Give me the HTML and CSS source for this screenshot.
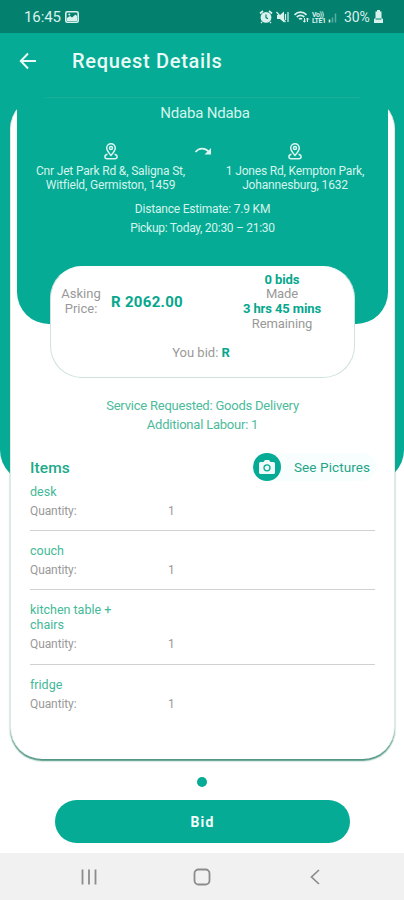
FILE: index.html
```html
<!DOCTYPE html>
<html lang="en">
<head>
<meta charset="utf-8">
<title>Request Details</title>
<link rel="stylesheet" href="styles.css">
</head>
<body>
<div class="screen">
  <div class="backdrop"></div>
  <header class="status">
    <span class="time">16:45</span>
    <svg class="shot" width="14" height="12" viewBox="0 0 14 12"><rect x=".8" y=".8" width="12.4" height="10.4" rx="1.5" fill="none" stroke="#d9f1ed" stroke-width="1.6"/><path d="M2 10V7l3-2 2 1.500 3.500-3L12 5v5z" fill="#d9f1ed"/><circle cx="4.300" cy="3.500" r="1" fill="#d9f1ed"/></svg>
    <svg class="sysicons" width="78" height="14" viewBox="0 0 78 14" fill="none" stroke="#d9f1ed">
      <path d="M1 3.500L4 1M10 1l3 2.500" stroke-width="1.700"/><circle cx="7" cy="7.400" r="5.400" fill="#d9f1ed" stroke="none"/><path d="M7 4.600v3l2 1.200" stroke="#04806e" stroke-width="1.200"/><path d="M3 12l-1 1M11 12l1 1" stroke-width="1.300"/>
      <path d="M18 5h3l4-3.500v11L21 9h-3z" fill="#d9f1ed" stroke="none"/><path d="M17.500 2l9 10" stroke-width="1.200"/><path d="M26.500 4v6M29 2v10" stroke-width="1.200"/>
      <path d="M35.500 4.800c3.500-3.500 8.500-3.500 12 0M37.800 7c2.300-2 5.200-2 7.500 0M40 9.200c1-.8 2-.8 3 0" stroke-width="1.700"/><path d="M45.500 8v4M43.800 10.500l1.700 1.700 1.500-1.700M48.500 12V8M47 9.500L48.500 8 50 9.500" stroke-width="1"/>
      <path d="M70.500 12.500V9.500" stroke-width="1.600"/><path d="M73.500 12.500v-5M76.500 12.500v-9" stroke-width="1.500" opacity=".4"/>
      <text class="volte" x="53" y="6.500">Vo))</text><text class="volte" x="53" y="13">LTE1</text>
    </svg>
    <span class="battery">30%</span>
    <svg class="batt" width="9" height="13" viewBox="0 0 9 13"><path d="M3 0h3v1.500h1.500V8L9 9v4H0V9l1.500-1V1.500H3z" fill="#d9f1ed"/><path d="M1.500 9h6" stroke="#04806e"/></svg>
  </header>
  <div class="appbar">
    <svg width="18" height="18" viewBox="0 0 18 18" fill="none" stroke="#e9faf7" stroke-width="2"><path d="M17 9H2M9 1.500L1.800 9 9 16.500"/></svg>
    <h1>Request Details</h1>
  </div>
  <main class="card">
    <section class="hero">
      <div class="name">Ndaba Ndaba</div>
      <div class="route">
        <div class="stop">
          <svg class="pin" width="14" height="17" viewBox="0 0 14 17" fill="none" stroke="#dcf5f0" stroke-width="1.500"><path d="M7 12.400C4.800 10 2.700 7.700 2.700 5.100a4.300 4.300 0 0 1 8.600 0C11.300 7.700 9.200 10 7 12.400z"/><circle cx="7" cy="5" r="1.500"/><path d="M3.500 11.300C0 12 .2 15.700 3 15.700h8c2.800 0 3-3.700-.5-4.400"/></svg>
          <p class="from">Cnr Jet Park Rd &amp;, Saligna St,<br>Witfield, Germiston, 1459</p>
        </div>
        <svg class="turn" width="18" height="12" viewBox="0 0 18 12"><path d="M1.500 7C5 2.500 11 2.500 14.500 6.500" fill="none" stroke="#dcf5f0" stroke-width="1.700"/><path d="M17 3v6.500h-6.500z" fill="#dcf5f0"/></svg>
        <div class="stop">
          <svg class="pin" width="14" height="17" viewBox="0 0 14 17" fill="none" stroke="#dcf5f0" stroke-width="1.500"><path d="M7 12.400C4.800 10 2.700 7.700 2.700 5.100a4.300 4.300 0 0 1 8.600 0C11.300 7.700 9.200 10 7 12.400z"/><circle cx="7" cy="5" r="1.500"/><path d="M3.500 11.300C0 12 .2 15.700 3 15.700h8c2.800 0 3-3.700-.5-4.400"/></svg>
          <p class="to">1 Jones Rd, Kempton Park,<br>Johannesburg, 1632</p>
        </div>
      </div>
      <p class="meta dist">Distance Estimate: 7.9 KM</p>
      <p class="meta pickup">Pickup: Today, 20:30 – 21:30</p>
    </section>
    <section class="price">
      <div class="top">
        <div class="asking">Asking<br>Price:</div>
        <div class="amount">R 2062.00</div>
        <div class="bids"><b>0 bids</b><br>Made<br><b>3 hrs 45 mins</b><br>Remaining</div>
      </div>
      <div class="yours">You bid: <b>R</b></div>
    </section>
    <section class="service">
      <p>Service Requested: Goods Delivery</p>
      <p>Additional Labour: 1</p>
    </section>
    <section class="items">
      <div class="head">
        <h2>Items</h2>
        <div class="pictures">
          <span class="camera"><svg width="16" height="14" viewBox="0 0 16 14"><path d="M1.500 2h3L6 0h4l1.500 2h3q1.500 0 1.500 1.500v9q0 1.500-1.500 1.500h-13Q0 14 0 12.500v-9Q0 2 1.500 2z" fill="#effbf8"/><circle cx="8" cy="7.800" r="3" fill="none" stroke="#05ab94" stroke-width="1.300"/></svg></span>
          <span class="see">See Pictures</span>
        </div>
      </div>
      <div class="item"><h3>desk</h3><div class="qty"><span>Quantity:</span><span>1</span></div></div>
      <div class="item"><h3>couch</h3><div class="qty"><span>Quantity:</span><span>1</span></div></div>
      <div class="item"><h3>kitchen table +<br>chairs</h3><div class="qty"><span>Quantity:</span><span>1</span></div></div>
      <div class="item"><h3>fridge</h3><div class="qty"><span>Quantity:</span><span>1</span></div></div>
    </section>
  </main>
  <div class="dot"></div>
  <button class="bid">Bid</button>
  <nav class="nav">
    <svg width="16" height="16" viewBox="0 0 16 16" stroke="#8c8c8c" stroke-width="1.800"><path d="M1.500 .5v15M8 .5v15M14.500 .5v15"/></svg>
    <svg width="18" height="18" viewBox="0 0 18 18" fill="none" stroke="#8c8c8c" stroke-width="1.800"><rect x="1.500" y="1.500" width="15" height="15" rx="4"/></svg>
    <svg width="16" height="16" viewBox="0 0 16 16" fill="none" stroke="#8c8c8c" stroke-width="1.700"><path d="M12 1L4.500 8l7.500 7"/></svg>
  </nav>
</div>
</body>
</html>
```
FILE: styles.css
```css
* { box-sizing: border-box; }
body { margin: 0; font-family: Roboto, "Liberation Sans", sans-serif; background: #fff; }
h1, h2, h3, p { margin: 0; font-weight: 400; }
svg { display: block; flex: none; }
.screen { position: relative; width: 404px; height: 900px; display: flex; flex-direction: column; overflow: hidden; isolation: isolate; }
.backdrop { position: absolute; z-index: -1; left: 0; right: 0; top: 33px; height: 449px; background: #05ab94; border-radius: 0 0 32px 32px; }
.status { height: 33px; flex: none; background: #04806e; display: flex; align-items: center; padding: 0 21px 0 24px; color: #d9f1ed; }
.time { width: 41px; font-size: 15px; letter-spacing: -.1px; }
.battery { font-size: 14px; letter-spacing: -.1px; margin-left: 7px; width: 30px; }
.sysicons { margin-left: auto; }
.volte { font-size: 7px; font-weight: 700; fill: #d9f1ed; stroke: none; letter-spacing: -.4px; }
.appbar { height: 64px; flex: none; display: flex; align-items: center; padding: 0 0 8px 19px; gap: 35px; }
.appbar h1 { font-size: 20px; line-height: 24px; font-weight: 500; letter-spacing: .7px; color: #e9faf7; }
.card { height: 662px; flex: none; margin: 0 9px 0 10px; background: #fff; border-radius: 32px; border: solid #dfe9e6; border-width: 0 1px; box-shadow: 0 1.500px 1.500px #4d9582; }
.hero { height: 227px; margin: 0 6px; background: #05ab94; border-radius: 0 0 32px 32px; text-align: center; color: #d4f3ed; padding-top: 6px; }
.hero::before { content: ""; display: block; height: 1px; margin: -6px 28px 5px; background: #16b09a; }
.name { font-size: 15px; line-height: 20px; letter-spacing: -.2px; padding-left: 5px; }
.route { display: flex; justify-content: space-between; margin-top: 20px; padding: 0 13px 0 14px; }
.stop { width: 160px; display: flex; flex-direction: column; align-items: center; }
.pin { margin-bottom: 5px; }
.stop p { font-size: 12px; line-height: 13.500px; white-space: nowrap; letter-spacing: -.17px; }
.from { margin-left: -1px; }
.turn { margin-top: 2px; }
.meta { font-size: 12px; line-height: 18px; letter-spacing: -.2px; }
.pickup { letter-spacing: -.28px; margin-top: 1px; }
.dist { margin-top: 8px; }
.price { position: relative; width: 305px; height: 112px; margin: -58px 0 0 39px; background: #fff; border: 1px solid #cfe2dd; border-top-color: #fff; border-radius: 32px; color: #999; font-size: 13px; line-height: 14.700px; text-align: center; }
.price b { font-weight: 700; color: #05a78d; }
.top { height: 70px; display: flex; align-items: center; padding-left: 10px; }
.asking { width: 40px; flex: none; }
.amount { width: 92px; flex: none; font-size: 15px; font-weight: 700; color: #05a78d; letter-spacing: .3px; }
.bids { width: 178px; flex: none; letter-spacing: -.1px; }
.yours { margin-top: 9px; padding-right: 3px; }
.service { margin-top: 18px; text-align: center; font-size: 13px; line-height: 19px; letter-spacing: -.22px; color: #4dbb9b; }
.items { padding: 19px 18px 0 19px; }
.head { height: 28px; display: flex; justify-content: space-between; align-items: center; }
.head h2 { padding-top: 1px; font-size: 15.500px; font-weight: 500; color: #22a98a; letter-spacing: .1px; }
.pictures { display: flex; width: 123px; height: 28px; align-items: center; border-radius: 14px; background: #f8fefd; }
.camera { width: 28px; height: 28px; border-radius: 50%; background: #05ab94; display: grid; place-items: center; }
.see { margin-left: 13px; font-size: 13.500px; font-weight: 400; letter-spacing: .1px; color: #25a588; white-space: nowrap; }
.item { margin-right: 1px; border-bottom: 1px solid #d0d0d0; padding: 12px 0 11.300px; }
.head + .item { padding-top: 2.700px; }
.item:last-child { border: 0; }
.item h3 { font-size: 12.500px; line-height: 15px; color: #43b997; }
.qty { display: flex; margin-top: 4px; font-size: 12px; line-height: 16px; letter-spacing: -.1px; color: #999; }
.qty span:first-child { width: 138px; }
.dot { width: 10px; height: 10px; flex: none; border-radius: 50%; background: #05ab94; margin: 18px auto 0 197px; }
.bid { width: 295px; height: 43px; flex: none; margin: 13px 0 0 55px; border: 0; border-radius: 22px; background: #05ab94; color: #f2fffc; font: 700 14px Roboto, "Liberation Sans", sans-serif; letter-spacing: 1.100px; padding: 0; }
.nav { height: 47px; margin-top: auto; flex: none; background: #f1f1f1; display: flex; justify-content: space-between; align-items: center; padding: 0 81px; }
```
